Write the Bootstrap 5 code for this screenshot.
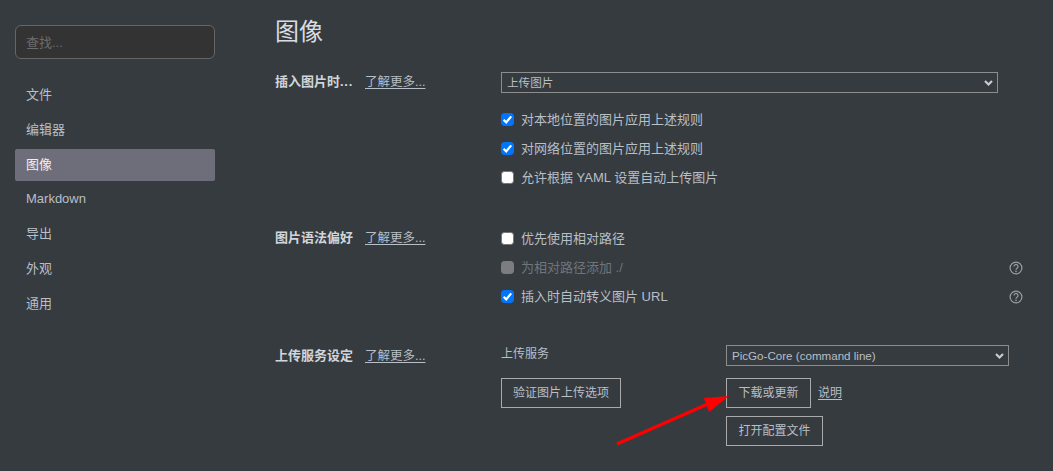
<!DOCTYPE html>
<html lang="zh">
<head>
  <meta charset="UTF-8">
  <title>偏好设置 - 图像</title>
  <link href="https://cdn.jsdelivr.net/npm/bootstrap@5.3.3/dist/css/bootstrap.min.css" rel="stylesheet">
  <style>
    html, body { height: 471px; overflow: hidden; }
    body { background: #363b40; color: #b8bfc6; font-family: "Liberation Sans", "Noto Sans CJK SC", sans-serif; font-size: 13px; position: relative; }
    .pref-side { width: 230px; padding: 25px 15px 0; flex: none; }
    .pref-search { height: 34px; background: #333; border: 1px solid #666; border-radius: 6px; color: #b8bfc6; font-size: 13px; padding: 0 10px; box-shadow: none; }
    .pref-search::placeholder { color: #6c6c6c; }
    .pref-search:focus { background: #333; color: #b8bfc6; border-color: #666; box-shadow: none; }
    .pref-nav { margin-top: 20px; gap: 2.8px; }
    .pref-nav a { height: 32px; line-height: 32px; padding: 0 11px; color: #b8bfc6; text-decoration: none; border-radius: 2px; }
    .pref-nav a.active { background: #6e6e7a; color: #f0f0f0; }
    .pref-main { padding-left: 45px; flex: 1; min-width: 0; }
    .pref-title { font-size: 24px; font-weight: 400; line-height: 30px; margin: 17px 0 0; color: #d8dde2; }
    .pref-group { display: flex; }
    .pref-head { width: 226px; flex: none; display: flex; align-items: baseline; gap: 12px; line-height: 20px; white-space: nowrap; }
    .pref-head b { color: #d0d5da; width: 78px; font-weight: 700; }
    .pref-dots { letter-spacing: .7px; }
    .pref-head a { font-size: 12.5px; color: #b8bfc6; text-underline-offset: 2px; }
    .pref-link { font-size: 12px; color: #b8bfc6; text-underline-offset: 2px; }
    .pref-body { flex: 1; min-width: 0; }
    .pref-select { display: block; height: 21px; padding: 0 20px 0 5px; font-size: 11.6px; line-height: 19px; color: #b8bfc6; background-color: #363b40; border: 1px solid #8d8d8d; border-radius: 0; background-position: right 4px center; background-size: 9px 8px; background-image: url("data:image/svg+xml,%3csvg xmlns='http://www.w3.org/2000/svg' viewBox='0 0 9 8'%3e%3cpath fill='none' stroke='%23c8ccd0' stroke-width='2.2' d='M1 2l3.5 3.5L8 2'/%3e%3c/svg%3e"); }
    .pref-check { display: flex; align-items: center; height: 29px; gap: 7px; }
    .pref-check input { width: 13px; height: 13px; margin: 0; flex: none; border-radius: 2px; border: 1px solid #767676; background-color: #fff; }
    .pref-check input:checked { background-color: #0075ff; border-color: #0075ff; background-size: 13px 13px; background-image: url("data:image/svg+xml,%3csvg xmlns='http://www.w3.org/2000/svg' viewBox='0 0 13 13'%3e%3cpath fill='none' stroke='%23fff' stroke-width='2.2' d='M2.6 6.8l2.6 2.6 5-6'/%3e%3c/svg%3e"); }
    .pref-check input:disabled { background-color: #7b7d80; border-color: #7b7d80; opacity: 1; }
    .pref-check label { margin: 0; }
    .pref-off { color: #70757a; }
    .pref-help { margin-left: auto; margin-right: 30px; width: 14px; height: 14px; flex: none; }
    .pref-btn { height: 30px; padding: 0 11.5px; font-size: 12px; color: #b8bfc6; background: transparent; border: 1px solid #aaa; border-radius: 0; line-height: 28px; }
    .pref-cols { display: grid; grid-template-columns: 225px 283px; }
    .pref-arrow { position: absolute; left: 610px; top: 390px; }
    .sec-one { margin-top: 25px; }
    .sel-wide { width: 497px; }
    .check-first { margin-top: 12px; }
    .sec-two { margin-top: 32px; }
    .sec-two .pref-head { padding-top: 4px; }
    .sec-three { margin-top: 34px; }
    .sec-three .pref-head { padding-top: 1px; }
    .svc-label { font-size: 12px; line-height: 19px; height: 33px; }
    .svc-check { padding: 0 11px; }
    .svc-row { margin-top: 12px; gap: 7px; }
    .svc-open { display: block; margin-top: 8px; }
  </style>
</head>
<body>
  <div class="d-flex">
    <div class="pref-side">
      <input class="form-control pref-search" placeholder="查找...">
      <nav class="d-flex flex-column pref-nav">
        <a href="#">文件</a>
        <a href="#">编辑器</a>
        <a href="#" class="active">图像</a>
        <a href="#">Markdown</a>
        <a href="#">导出</a>
        <a href="#">外观</a>
        <a href="#">通用</a>
      </nav>
    </div>

    <div class="pref-main">
      <h1 class="pref-title">图像</h1>

      <section class="pref-group sec-one">
        <div class="pref-head"><b>插入图片时<span class="pref-dots">...</span></b><a href="#">了解更多...</a></div>
        <div class="pref-body">
          <select class="form-select pref-select sel-wide"><option>上传图片</option></select>
          <div class="pref-check check-first"><input class="form-check-input" type="checkbox" checked><label>对本地位置的图片应用上述规则</label></div>
          <div class="pref-check"><input class="form-check-input" type="checkbox" checked><label>对网络位置的图片应用上述规则</label></div>
          <div class="pref-check"><input class="form-check-input" type="checkbox"><label>允许根据 YAML 设置自动上传图片</label></div>
        </div>
      </section>

      <section class="pref-group sec-two">
        <div class="pref-head"><b>图片语法偏好</b><a href="#">了解更多...</a></div>
        <div class="pref-body">
          <div class="pref-check"><input class="form-check-input" type="checkbox"><label>优先使用相对路径</label></div>
          <div class="pref-check pref-off"><input class="form-check-input" type="checkbox" disabled><label>为相对路径添加 ./</label>
            <svg class="pref-help" viewBox="0 0 14 14"><circle cx="7" cy="7" r="5.9" fill="none" stroke="#9a9fa4" stroke-width="1.2"/><path d="M5 5.4a2 2 0 1 1 3 1.8c-.7.4-1 .8-1 1.5" fill="none" stroke="#9a9fa4" stroke-width="1.2"/><circle cx="7" cy="10.4" r=".8" fill="#9a9fa4"/></svg>
          </div>
          <div class="pref-check"><input class="form-check-input" type="checkbox" checked><label>插入时自动转义图片 URL</label>
            <svg class="pref-help" viewBox="0 0 14 14"><circle cx="7" cy="7" r="5.9" fill="none" stroke="#9a9fa4" stroke-width="1.2"/><path d="M5 5.4a2 2 0 1 1 3 1.8c-.7.4-1 .8-1 1.5" fill="none" stroke="#9a9fa4" stroke-width="1.2"/><circle cx="7" cy="10.4" r=".8" fill="#9a9fa4"/></svg>
          </div>
        </div>
      </section>

      <section class="pref-group sec-three">
        <div class="pref-head"><b>上传服务设定</b><a href="#">了解更多...</a></div>
        <div class="pref-body pref-cols">
          <div>
            <div class="svc-label">上传服务</div>
            <button class="pref-btn svc-check" type="button">验证图片上传选项</button>
          </div>
          <div>
            <select class="form-select pref-select"><option>PicGo-Core (command line)</option></select>
            <div class="d-flex align-items-center svc-row">
              <button class="pref-btn" type="button">下载或更新</button>
              <a href="#" class="pref-link">说明</a>
            </div>
            <button class="pref-btn svc-open" type="button">打开配置文件</button>
          </div>
        </div>
      </section>
    </div>
  </div>

  <svg class="pref-arrow" width="125" height="60" viewBox="0 0 125 60">
    <line x1="7" y1="54" x2="100" y2="13" stroke="#f00" stroke-width="3.2"/>
    <polygon points="119,6 94,8 99,22" fill="#f00"/>
  </svg>
</body>
</html>
